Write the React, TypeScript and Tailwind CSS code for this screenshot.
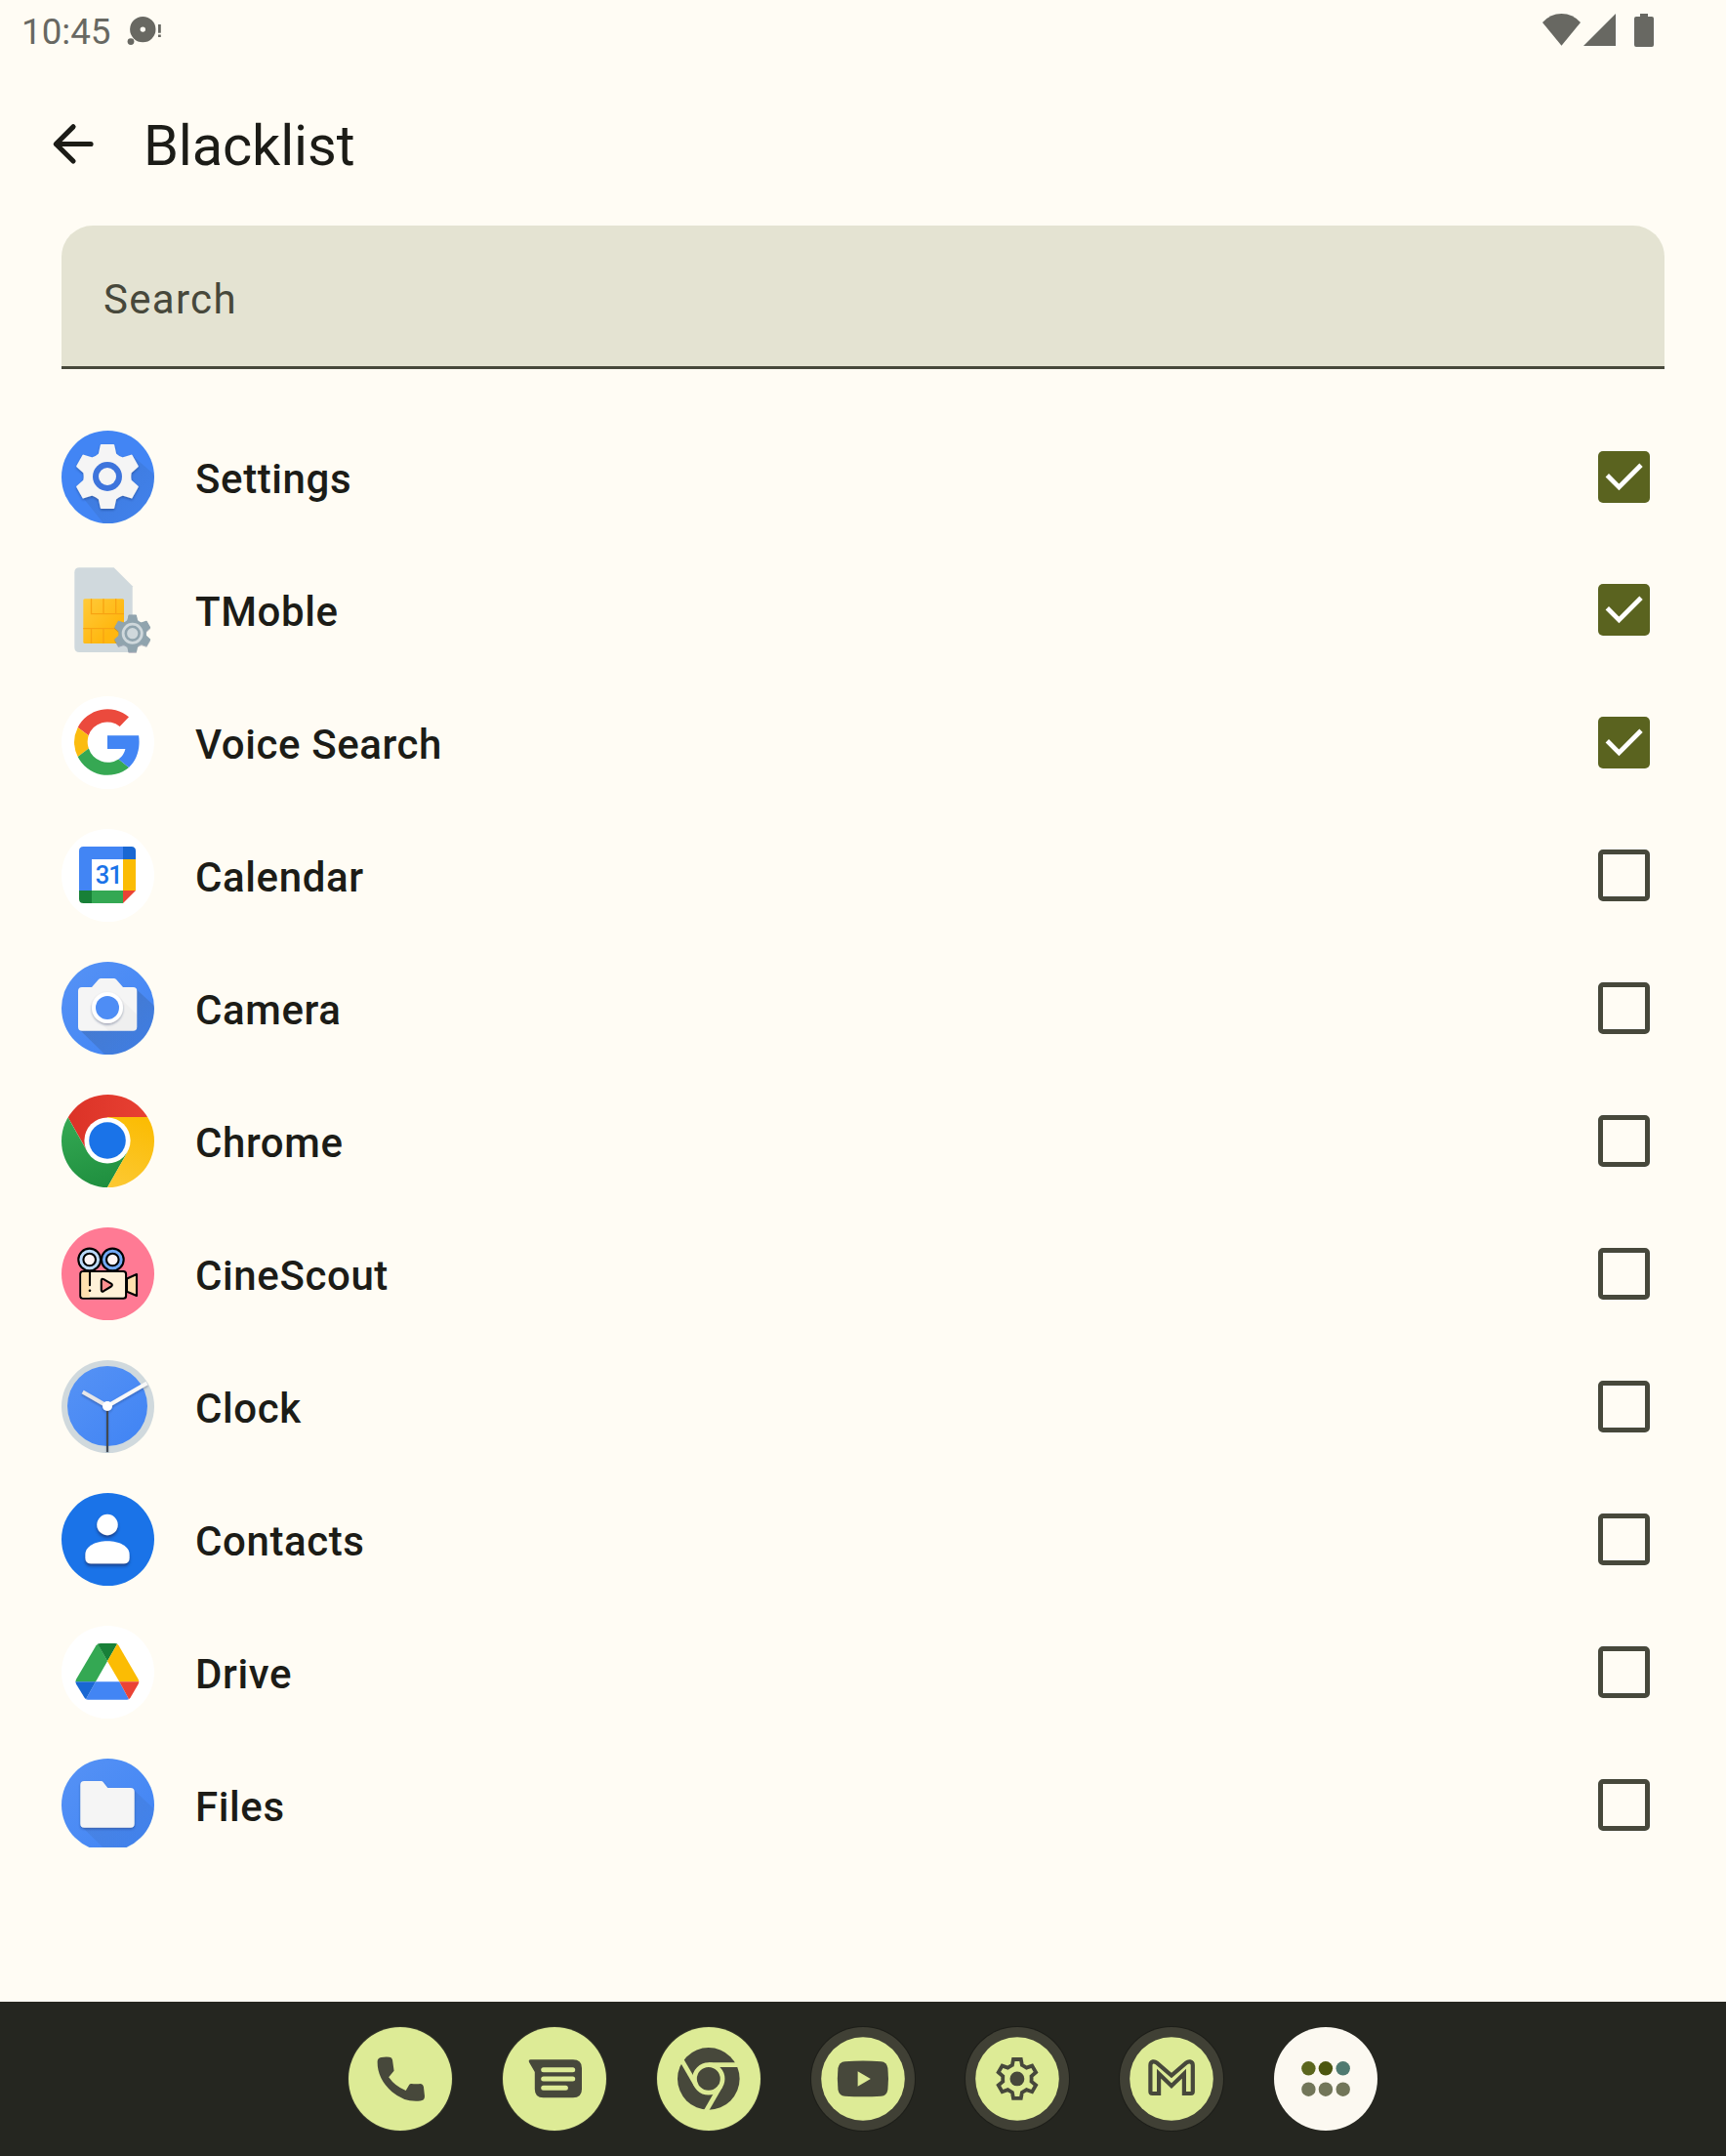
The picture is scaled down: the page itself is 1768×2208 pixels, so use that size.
import { useState, type ReactNode } from 'react';

const GEAR =
  'M-8.2 -22.8L-6.2 -32H6.2L8.2 -22.8Q11.3 -19.8 15.6 -18.5L24.6 -21.4L30.8 -10.6L23.8 -4.3Q22.8 0 23.8 4.3L30.8 10.6L24.6 21.4L15.6 18.5Q11.3 19.8 8.2 22.8L6.2 32H-6.2L-8.2 22.8Q-11.3 19.8 -15.6 18.5L-24.6 21.4L-30.8 10.6L-23.8 4.3Q-22.8 0 -23.8 -4.3L-30.8 -10.6L-24.6 -21.4L-15.6 -18.5Q-11.3 -19.8 -8.2 -22.8Z';

function AppIcon({ id, square, children }: { id: string; square?: boolean; children: ReactNode }) {
  return (
    <svg viewBox="0 0 95 95" className="mt-5 h-[95px] w-[95px] shrink-0">
      <defs>
        <clipPath id={`${id}-clip`}>
          <circle cx="47.5" cy="47.5" r="47.5" />
        </clipPath>
        <linearGradient id={`${id}-long`} x1="0.2" y1="0.2" x2="0.9" y2="0.9">
          <stop offset="0" stopColor="#263238" stopOpacity="0.2" />
          <stop offset="1" stopColor="#263238" stopOpacity="0.04" />
        </linearGradient>
        <linearGradient id={`${id}-blue`} x1="0.1" y1="0.1" x2="0.9" y2="0.9">
          <stop offset="0" stopColor="#5491F5" />
          <stop offset="1" stopColor="#4285F4" />
        </linearGradient>
        <filter id={`${id}-drop`} x="-30%" y="-30%" width="160%" height="160%">
          <feDropShadow dx="0" dy="1.4" stdDeviation="1.2" floodColor="#1a2a55" floodOpacity="0.4" />
        </filter>
      </defs>
      <g clipPath={square ? undefined : `url(#${id}-clip)`}>{children}</g>
    </svg>
  );
}

const SettingsIcon = () => (
  <AppIcon id="settings">
    <rect width="95" height="95" fill="#4285F4" />
    <path d="M72 25L110 58V110H55L23 70Z" fill="url(#settings-long)" opacity=".6" />
    <g transform="translate(47 47)">
      <path d={GEAR} fill="#F5F5F5" stroke="#F5F5F5" strokeWidth="2" strokeLinejoin="round" filter="url(#settings-drop)" />
      <circle r="15" fill="#3D74DC" />
      <circle r="9" fill="#F5F5F5" />
    </g>
  </AppIcon>
);

const SimIcon = () => (
  <AppIcon id="sim" square>
    <defs>
      <linearGradient id="sim-chip" x1="0" y1="0" x2="0.7" y2="0.7">
        <stop offset="0" stopColor="#FFCA3A" />
        <stop offset="1" stopColor="#FFB70F" />
      </linearGradient>
    </defs>
    <path d="M18.3 4.3H53.7L72.7 23.3V91H18.3Q13.3 91 13.3 86V9.3Q13.3 4.3 18.3 4.3Z" fill="#D0D9DD" />
    <rect x="22.3" y="36.3" width="41.7" height="45.7" rx="1.5" fill="url(#sim-chip)" />
    <path d="M30.5 36.3V51.7H64M43 36.3V51.7M55.7 36.3V51.7M22.3 66.7H60M30.5 66.7V82M43 66.7V82" fill="none" stroke="#F8A312" strokeWidth="1.3" />
    <g transform="translate(72.7 71.7)">
      <path d={GEAR} transform="scale(.58)" fill="#90A4AE" stroke="#90A4AE" strokeWidth="2" strokeLinejoin="round" filter="url(#sim-drop)" />
      <circle r="11" fill="#CFD8DC" />
      <circle r="8.2" fill="#90A4AE" />
      <circle r="5.6" fill="#CFD8DC" />
    </g>
  </AppIcon>
);

const GoogleIcon = () => (
  <AppIcon id="google">
    <rect width="95" height="95" fill="#fff" />
    <path d="M69 21.3A34 34 0 0 0 16.7 32L27.7 40.2A20.3 20.3 0 0 1 59.7 30.9Z" fill="#EB4A3D" />
    <path d="M16.7 32A34 34 0 0 0 16.7 62L27.9 53.5A20.3 20.3 0 0 1 27.7 40.2Z" fill="#FBBC0F" />
    <path d="M16.7 62A34 34 0 0 0 69 72.9L58.5 64.4A20.3 20.3 0 0 1 27.9 53.5Z" fill="#36A853" />
    <path d="M47 40.2H79.1C80.9 53 77.6 65 69 72.9L58.5 64.6Q64 60.5 65.4 54H47Z" fill="#4285F4" />
  </AppIcon>
);

const CalendarIcon = () => (
  <AppIcon id="calendar">
    <rect width="95" height="95" fill="#fff" />
    <path d="M22.5 18H63V31H31V63H18V22.5Q18 18 22.5 18Z" fill="#4285F4" />
    <path d="M63 18H71.5Q76 18 76 22.5V31H63Z" fill="#1967D2" />
    <path d="M63 31H76V63H63Z" fill="#FBBC04" />
    <path d="M31 63H63V76H31Z" fill="#34A853" />
    <path d="M18 63H31V76H22.5Q18 76 18 71.5Z" fill="#188038" />
    <path d="M63 63H76L63 76Z" fill="#EA4335" />
    <text x="34.8" y="56.3" letterSpacing="-1" fontFamily="Roboto, sans-serif" fontWeight="500" fontSize="25.5" fill="#1A73E8">31</text>
  </AppIcon>
);

const CameraIcon = () => (
  <AppIcon id="camera">
    <rect width="95" height="95" fill="url(#camera-blue)" />
    <path d="M76.5 28L120 68V120H70L18.5 69.5Z" fill="url(#camera-long)" />
    <path d="M21 26H31L38 18Q39 17 40.3 17H53.7Q55 17 56 18L63 26H73.3Q77.3 26 77.3 30V66.7Q77.3 70.7 73.3 70.7H21Q17 70.7 17 66.7V30Q17 26 21 26Z" fill="#F5F5F5" />
    <path d="M58.5 35.5L77.3 54V66.7Q77.3 70.7 73.3 70.7H48L35.5 58Z" fill="#000" opacity=".025" />
    <circle cx="47" cy="47" r="16" fill="#fff" filter="url(#camera-drop)" />
    <circle cx="47" cy="47" r="12" fill="#4E8DF5" />
  </AppIcon>
);

const ChromeIcon = () => (
  <AppIcon id="chrome">
    <defs>
      <linearGradient id="chrome-red"><stop stopColor="#D93025" /><stop offset="1" stopColor="#EA4335" /></linearGradient>
      <linearGradient id="chrome-green" x1=".3" y1="0" x2=".6" y2="1"><stop stopColor="#34A853" /><stop offset="1" stopColor="#1E8E3E" /></linearGradient>
      <linearGradient id="chrome-yellow" x1=".6" y1="0" x2=".3" y2="1"><stop stopColor="#FBBC04" /><stop offset="1" stopColor="#FCC934" /></linearGradient>
    </defs>
    <path d="M-8 0H103V23H47V47L26.8 58.8L6.5 23Z" fill="url(#chrome-red)" />
    <path d="M-10 23.3H6.6L26.8 59L47 47L67.5 59L47 95V100H-10Z" fill="url(#chrome-green)" />
    <path d="M47 23H100V100H44.2L67.5 59L47 47Z" fill="url(#chrome-yellow)" />
    <circle cx="47" cy="47" r="23.6" fill="#fff" />
    <circle cx="47" cy="47" r="18.8" fill="#1A73E8" />
  </AppIcon>
);

const CineIcon = () => (
  <AppIcon id="cine">
    <rect width="95" height="95" fill="#FF7A94" />
    <g stroke="#000" strokeWidth="2.1" strokeLinejoin="round" strokeLinecap="round">
      <circle cx="28.7" cy="33" r="11.4" fill="#BBDAFB" />
      <circle cx="28.7" cy="33" r="6.3" fill="#FFF5F5" />
      <circle cx="52.3" cy="33" r="11.4" fill="#72A9F6" />
      <circle cx="52.3" cy="33" r="6.3" fill="#FFF5F5" />
      <path d="M67 52.5L77 48V70L67 65.7Z" fill="#FFE0AE" />
      <rect x="19.3" y="45" width="46.8" height="27.8" rx="2.8" fill="#FFF1D8" />
      <path d="M22 46.1H28.8V71.7H22Q20.4 71.7 20.4 70V48Q20.4 46.1 22 46.1Z" fill="#FFE0AE" stroke="none" />
      <path d="M29 46V59.3" fill="none" />
      <path d="M40.8 54.5Q40.8 51.8 43.2 53.1L50.9 57.7Q52.8 59.1 50.9 60.5L43.2 65.2Q40.8 66.4 40.8 64Z" fill="#FF8F8F" />
    </g>
    <circle cx="29" cy="64.7" r="1.3" />
  </AppIcon>
);

const ClockIcon = () => (
  <AppIcon id="clock">
    <rect width="95" height="95" fill="#D0D9DD" />
    <circle cx="47" cy="47" r="41" fill="url(#clock-blue)" />
    <g filter="url(#clock-drop)">
      <path d="M47 47L21.7 32.4" stroke="#E6E6E8" strokeWidth="4" />
      <path d="M47 47L87.5 23.4" stroke="#F8F8F8" strokeWidth="4" />
      <path d="M47 47V94" stroke="#424853" strokeWidth="2" />
      <circle cx="47" cy="47" r="5" fill="#fff" />
    </g>
  </AppIcon>
);

const ContactsIcon = () => (
  <AppIcon id="contacts">
    <defs>
      <filter id="contacts-deep" x="-30%" y="-30%" width="160%" height="170%">
        <feDropShadow dx="0" dy="2.6" stdDeviation="1.4" floodColor="#12387a" floodOpacity=".8" />
      </filter>
    </defs>
    <rect width="95" height="95" fill="#1A73E8" />
    <g fill="#fff" filter="url(#contacts-deep)">
      <circle cx="47" cy="32.5" r="10.7" />
      <path d="M24.4 63C24.4 54.5 35 49.3 47 49.3S69.6 54.5 69.6 63V66.5Q69.6 72.3 63.8 72.3H30.2Q24.4 72.3 24.4 66.5Z" />
    </g>
  </AppIcon>
);

const DriveIcon = () => (
  <AppIcon id="drive">
    <defs>
      <clipPath id="drive-shape">
        <path d="M40 18H55Q57.3 18 58.6 20.2L78.5 54.5Q80 57.3 78.5 60L70.5 73.8Q69.3 75.7 67 75.7H27Q24.8 75.7 23.6 73.8L15.2 60Q13.7 57.3 15.2 54.5L35.4 20.2Q37 18 40 18Z" />
      </clipPath>
    </defs>
    <rect width="95" height="95" fill="#fff" />
    <g clipPath="url(#drive-shape)">
      <path d="M36.5 17L12 57.3H35L47 36.3Z" fill="#34A853" />
      <path d="M36.2 17H58L47 36.3Z" fill="#188038" />
      <path d="M58 17L82 57.3H59.3L47 36.3Z" fill="#FBBC04" />
      <path d="M35 57.3H59.3L70 77H24Z" fill="#4285F4" />
      <path d="M12 57.3H35L24 77Z" fill="#1967D2" />
      <path d="M59.3 57.3H82L70 77Z" fill="#EA4335" />
    </g>
  </AppIcon>
);

const FilesIcon = () => (
  <AppIcon id="files">
    <rect width="95" height="95" fill="url(#files-blue)" />
    <path d="M74 32L110 66V110H62L20.5 69.5Z" fill="url(#files-long)" opacity=".5" />
    <path d="M23.3 23H40.3Q42 23 43 24.4L47.3 30H70.7Q74.7 30 74.7 34V66.7Q74.7 70.7 70.7 70.7H23.3Q19.3 70.7 19.3 66.7V27Q19.3 23 23.3 23Z" fill="#F5F5F5" filter="url(#files-drop)" />
  </AppIcon>
);

const APPS = [
  { name: 'Settings', Icon: SettingsIcon, on: true },
  { name: 'TMoble', Icon: SimIcon, on: true },
  { name: 'Voice Search', Icon: GoogleIcon, on: true },
  { name: 'Calendar', Icon: CalendarIcon, on: false },
  { name: 'Camera', Icon: CameraIcon, on: false },
  { name: 'Chrome', Icon: ChromeIcon, on: false },
  { name: 'CineScout', Icon: CineIcon, on: false },
  { name: 'Clock', Icon: ClockIcon, on: false },
  { name: 'Contacts', Icon: ContactsIcon, on: false },
  { name: 'Drive', Icon: DriveIcon, on: false },
  { name: 'Files', Icon: FilesIcon, on: false },
];

function Checkbox({ on }: { on: boolean }) {
  return on ? (
    <span className="mt-[41px] mr-[15px] h-[53px] w-[53px] rounded-[5px] bg-[#5a631f]">
      <svg viewBox="0 0 53 53" className="h-full w-full">
        <path d="M9.3 24.8L21.4 36.9L44 14.3" fill="none" stroke="#fff" strokeWidth="4.8" />
      </svg>
    </span>
  ) : (
    <span className="mt-[41px] mr-[15px] h-[53px] w-[53px] rounded-[5px] border-5 border-[#47483b]" />
  );
}

function Dock({ ring, children }: { ring?: boolean; children: ReactNode }) {
  return (
    <svg viewBox="0 0 106 106" className="h-[106px] w-[106px] overflow-visible">
      <circle cx="53" cy="53" r="54" fill={ring ? '#1d1e19' : '#33352a'} />
      <circle cx="53" cy="53" r="53" fill={ring ? '#404035' : '#ddeb96'} />
      {ring && <circle cx="53" cy="53" r="42.8" fill="#ddeb96" />}
      {children}
    </svg>
  );
}

export default function App() {
  const [checked, setChecked] = useState(APPS.map((a) => a.on));
  return (
    <div className="flex h-[2208px] w-[1768px] flex-col overflow-hidden bg-[#fffcf4] font-['Roboto',sans-serif] text-[#1c1c17]">
      <div className="flex h-[63px] items-start justify-between pl-[22px] text-[#686862]">
        <div className="flex items-start">
          <span className="mt-[11px] text-[36.75px] leading-[44px]">10:45</span>
          <svg viewBox="130 14 38 34" className="mt-3.5 ml-4 h-[34px] w-[38px]" fill="currentColor">
            <path fillRule="evenodd" d="M133.1 30.1a13.2 13.2 0 1 0 26.4 0a13.2 13.2 0 1 0 -26.4 0ZM143.6 30.1a2.7 2.7 0 1 1 5.4 0a2.7 2.7 0 1 1 -5.4 0Z" />
            <circle cx="134" cy="42.6" r="3.4" />
            <path d="M162 25h2.8v8.7H162zM162 35.4h2.8v2.6H162z" />
          </svg>
        </div>
        <svg viewBox="1578 12 120 38" className="mt-3 mr-[70px] h-[38px] w-[120px]" fill="currentColor">
          <path d="M1580 23Q1588 14 1599.5 14T1619 23L1599.5 46.7Z" />
          <path d="M1655 14V47H1622Z" />
          <path d="M1680 14H1688V17H1692Q1694 17 1694 19V46Q1694 48 1692 48H1676Q1674 48 1674 46V19Q1674 17 1676 17H1680Z" />
        </svg>
      </div>

      <header className="flex h-42 items-start pl-[52px]">
        <svg viewBox="0 0 46 46" className="mt-[61px] h-[46px] w-[46px]" fill="none" stroke="currentColor" strokeWidth="5.2" strokeLinecap="round" strokeLinejoin="round">
          <path d="M41 23.5H5.5M23 5.8L5.3 23.5L23 41" />
        </svg>
        <h1 className="mt-[50px] ml-[49px] text-[57.75px] leading-[72px] tracking-[-0.15px]">Blacklist</h1>
      </header>

      <div className="mx-[63px] flex h-[147px] shrink-0 items-center rounded-t-[32px] border-b-[3px] border-[#47483b] bg-[#e4e3d2] px-[43px] text-[42px] tracking-[1.3px] text-[#47483b]">
        <span className="mt-1.5">Search</span>
      </div>

      <main className="mx-[63px] mt-[43px] h-[1471px] shrink-0 overflow-hidden">
        {APPS.map(({ name, Icon }, i) => (
          <div
            key={name}
            className="flex h-34 items-start"
            onClick={() => setChecked(checked.map((c, j) => (j === i ? !c : c)))}
          >
            <Icon />
            <span className="mt-[45px] ml-[42px] flex-1 text-[42px] leading-[50px] font-medium tracking-[0.6px]">{name}</span>
            <Checkbox on={checked[i]} />
          </div>
        ))}
      </main>

      <nav className="mt-auto flex h-[158px] shrink-0 items-center justify-center gap-[52px] bg-[#252620]">
        <Dock>
          <path d="M29.6 35.5Q29.6 31.5 33.5 31Q37.5 30.3 42 30.7Q44.5 31 45 33.5L46.6 44.7L41.2 51.3Q47.5 60.5 58.7 65L62.2 59Q63 57.8 64.5 58Q69 58.4 74 58Q76.4 58.3 76.9 61L78 70.7Q78 75 73.5 75.6Q58 77.5 44.5 66.2Q29.5 53 29.6 35.5Z" fill="#47483b" />
        </Dock>
        <Dock>
          <path d="M28.5 33.3H72Q81 33.3 81 42V63.5Q81 72.3 72 72.3H41.5Q32.8 72.3 32.8 63.5V46L27 36Q26 33.3 28.5 33.3Z" fill="#47483b" />
          <path d="M41.7 43.8H71.7M41.7 53H71.7M41.7 62.2H64.4" stroke="#ddeb96" strokeWidth="5" strokeLinecap="round" />
        </Dock>
        <Dock>
          <g transform="translate(52.8 52.9)">
            <circle r="31.8" fill="#47483b" />
            <circle r="14.3" fill="none" stroke="#ddeb96" strokeWidth="4.7" />
            <g stroke="#ddeb96" strokeWidth="4.7">
              <path d="M0 -14.3H32" />
              <path d="M0 -14.3H32" transform="rotate(120)" />
              <path d="M0 -14.3H32" transform="rotate(240)" />
            </g>
          </g>
        </Dock>
        <Dock ring>
          <path d="M34.5 35.2Q53 34 71.5 35.2Q77.5 35.7 78.4 42Q79.6 53 78.4 64Q77.5 70.3 71.5 70.7Q53 71.8 34.5 70.7Q28.5 70.3 27.4 64Q26.3 53 27.4 42Q28.5 35.7 34.5 35.2Z" fill="#47483b" />
          <path d="M47.6 45.3L60.8 53L47.6 60.7Z" fill="#ddeb96" />
        </Dock>
        <Dock ring>
          <g transform="translate(52.9 52.9)">
            <path d="M-5 -14L-3.9 -19.9H3.9L5 -14Q7 -12.9 9.6 -11.3L15.3 -13.3L19.2 -6.6L14.6 -2.7Q14.8 0 14.6 2.7L19.2 6.6L15.3 13.3L9.6 11.3Q7 12.9 5 14L3.9 19.9H-3.9L-5 14Q-7 12.9 -9.6 11.3L-15.3 13.3L-19.2 6.6L-14.6 2.7Q-14.8 0 -14.6 -2.7L-19.2 -6.6L-15.3 -13.3L-9.6 -11.3Q-7 -12.9 -5 -14Z" fill="none" stroke="#47483b" strokeWidth="3.8" />
            <circle r="7.4" fill="#47483b" />
          </g>
        </Dock>
        <Dock ring>
          <path d="M40.1 68V47.8L53 60.2L65.9 47.8V68H72.8Q74.8 68 74.8 66V39Q74.8 36 72 35.4Q70 35 68 36.7L53 49.6L38 36.7Q36 35 34 35.4Q31.4 36 31.4 39V66Q31.4 68 33.4 68Z" fill="none" stroke="#47483b" strokeWidth="4.2" />
        </Dock>
        <svg viewBox="0 0 106 106" className="h-[106px] w-[106px]">
          <circle cx="53" cy="53" r="53" fill="#fcf9f1" />
          <circle cx="35.4" cy="42.3" r="7.2" fill="#5b661d" />
          <circle cx="52.9" cy="42.3" r="7.2" fill="#4c560f" />
          <circle cx="70.7" cy="42.3" r="7.2" fill="#4f7a70" />
          <circle cx="35.4" cy="63.7" r="7.2" fill="#727659" />
          <circle cx="52.9" cy="63.7" r="7.2" fill="#727659" />
          <circle cx="70.7" cy="63.7" r="7.2" fill="#727659" />
        </svg>
      </nav>
    </div>
  );
}
